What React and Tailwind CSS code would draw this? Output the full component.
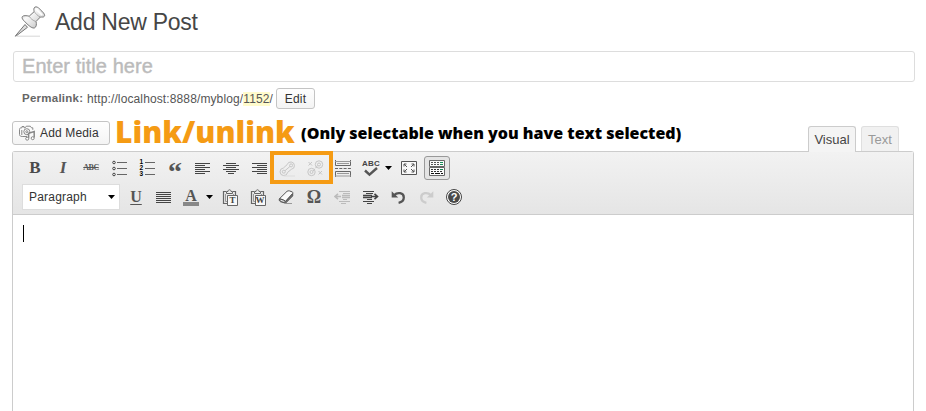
import React from "react";

const sans = "font-['Liberation_Sans',Arial,sans-serif]";
const serif = "font-['Liberation_Serif',serif]";

function Cell({ children, className = "w-7" }) {
  return <div className={`relative flex h-7 shrink-0 items-center justify-center ${className}`}>{children}</div>;
}

function Icon({ children, w = 18, h = 18, color = "#555" }) {
  return (
    <svg width={w} height={h} viewBox={`0 0 ${w} ${h}`} fill="none" stroke={color} strokeWidth="1" className="block shrink-0">
      {children}
    </svg>
  );
}

function Lines({ rows }) {
  return (
    <Icon w={16} h={14} color="#454545">
      {rows.map(([a, b], i) => (
        <path key={i} d={`M${a} ${i * 2 + 2.5}H${b}`} />
      ))}
    </Icon>
  );
}

const Arrow = () => (
  <svg width="7" height="4" viewBox="0 0 7 4" className="block">
    <path d="M0 0h7L3.5 4z" fill="#000" />
  </svg>
);

function PinIcon() {
  return (
    <svg width="32" height="32" viewBox="0 0 32 32" className="block">
      <defs>
        <linearGradient id="pin" x1="0" y1="0" x2="1" y2="1">
          <stop offset="0" stopColor="#aaa" />
          <stop offset=".35" stopColor="#fafafa" />
          <stop offset=".65" stopColor="#ddd" />
          <stop offset="1" stopColor="#aaa" />
        </linearGradient>
      </defs>
      <path d="M3 30.2h23" stroke="#ccc" strokeWidth=".8" />
      <path d="M11 18.5L2 29.2 1.3 30.2 2.6 29.6 13.5 21.3z" fill="#ddd" stroke="#666" strokeWidth=".9" />
      <path
        d="M20.8 1.2C22.3.3 24 1.2 26 3.3 28.5 5.7 31.5 8.5 30.4 10.2 29.5 11.5 27.8 11 26.4 11L22 15.5C22.8 18 22.4 21 20.7 21.8 18.8 22.7 15.8 20.6 13 17.8 10 15 7.3 12.5 8.3 10.7 9.1 9.3 12.5 9.5 15.2 10.2L20.2 5.6C19.8 4.2 19.5 2 20.8 1.2z"
        fill="url(#pin)"
        stroke="#777"
        strokeWidth="1"
      />
      <path d="M20.2 5.5c1.5 2.2 3.5 4.5 6.2 5.5M15.2 10.2c1.4 2.5 3.8 4.4 6.7 5.3" fill="none" stroke="#999" strokeWidth=".8" />
      <path d="M22 3.2l6.2 5.9" stroke="#fff" strokeWidth="1.6" />
    </svg>
  );
}

function MediaIcon() {
  return (
    <Icon w={17} h={16} color="#888">
      <path d="M8 11.5H3.2C1.6 11.5.5 10.8.5 9.5V4.4C.5 3.3 1.2 2.8 2.2 2.8H3V1.5H5v1.3h1.2L7.3 1.2h4l1.2 1.6h1.3v2" />
      <circle cx="7.8" cy="6.7" r="3" />
      <circle cx="7.8" cy="6.7" r="1" />
      <path d="M2.8 5v5" />
      <path d="M9.6 13.3V8.2l5.6-1.7v6" strokeWidth="1.5" />
      <circle cx="8.2" cy="13.7" r="1.5" fill="#fff" />
      <circle cx="13.7" cy="13.2" r="1.5" fill="#fff" />
    </Icon>
  );
}

function ListIcon({ ordered }) {
  return (
    <div className="flex items-center gap-px">
      {ordered ? (
        <div className="flex w-1 flex-col font-['Liberation_Sans',sans-serif] text-[6.5px] font-bold leading-[6px] text-black">
          <span>1</span>
          <span>2</span>
          <span>3</span>
        </div>
      ) : (
        <Icon w={4} h={17} color="#444">
          <circle cx="2" cy="2.5" r="1.3" />
          <circle cx="2" cy="8.5" r="1.3" />
          <circle cx="2" cy="14.5" r="1.3" />
        </Icon>
      )}
      <Icon w={10} h={17} color="#666">
        <path d="M0 2.5h10M0 8.5h10M0 14.5h10" />
      </Icon>
    </div>
  );
}

function PasteIcon({ letter }) {
  return (
    <div className="relative mr-[2px] h-[17px] w-4">
      <Icon w={16} h={17} color="#666">
        <path d="M4 2.5H1.5v12H5M11 2.5h2.5V6" strokeWidth="1.2" />
        <path d="M4.5 4.5v-2H6C6 .2 9 .2 9 2.5h1.5v2z" fill="#eee" />
        <path d="M3.5 5v7.5H5M11.5 5v1" stroke="#999" />
        <path d="M5.5 6.5h10v10h-10z" fill="#f8f8f8" />
      </Icon>
      <span className={`absolute left-[6px] top-[7px] w-[9px] text-center text-[9px] font-bold leading-[9px] text-[#444] ${serif}`}>{letter}</span>
    </div>
  );
}

const LinkIcon = () => (
  <Icon w={17} h={17} color="#c6c6c6">
    <path d="M8.2 4.6a3.7 3.7 0 1 1 4.2 4.7L8.6 12.4A3.8 3.8 0 1 1 4.4 8z" />
    <circle cx="12.1" cy="5.4" r="1.5" />
    <circle cx="4.8" cy="11.7" r="1.5" />
    <path d="M6 10.7l5-4.3" />
    <path d="M5 16h11" stroke="#ddd" />
  </Icon>
);

const UnlinkIcon = () => (
  <Icon w={17} h={17} color="#c6c6c6">
    <circle cx="12" cy="4.5" r="3.7" />
    <circle cx="12" cy="4.5" r="1.5" />
    <circle cx="4.5" cy="12" r="3.7" />
    <circle cx="4.5" cy="12" r="1.5" />
    <path d="M1.5 2L5 5.5M5 2L1.5 5.5M11.5 11l3.5 3.5M15 11l-3.5 3.5" />
    <path d="M8.5 8.2L10.5 5.5M6 11l2-2" />
  </Icon>
);

const MoreIcon = () => (
  <Icon w={16} h={17} color="#666">
    <path d="M.5 0v5.5h15V0M.5 17v-5.5h15V17" />
    <path d="M0 1.5h16M2 3.5h12M2 13.5h12M0 16h16" stroke="#999" />
    <path d="M0 8.5h16" strokeDasharray="3 1.3" />
  </Icon>
);

const FullscreenIcon = () => (
  <Icon w={16} h={14} color="#555">
    <path d="M.5.5h15v13H.5z" fill="#f8f8f8" />
    <path d="M3 5.5V3h2.5M3 3l3 3M10.5 3H13v2.5M13 3l-3 3M3 8.5V11h2.5M3 11l3-3M10.5 11H13V8.5M13 11l-3-3" />
  </Icon>
);

const KitchenIcon = () => (
  <Icon w={16} h={16} color="#666">
    <path d="M.5.5h15v6H.5zM.5 7.5h15v8H.5z" fill="#fafafa" />
    <path d="M2 2.5h9M2 4.5h9" stroke="#555" strokeDasharray="2 1" />
    <path d="M11 2.5h3M11 4.5h3" stroke="#168a55" />
    <path d="M2 9.5h9M2 11.5h12" stroke="#333" strokeDasharray="2 1" />
    <path d="M2 13.5h12" stroke="#111" strokeDasharray="3 1 5 1" />
    <path d="M11 9.5h3" stroke="#168a55" />
  </Icon>
);

const EraserIcon = () => (
  <Icon w={16} h={16} color="#555">
    <path d="M1.5 9.7L9 2.3c.7-.5 1.5-.6 2.5-.4l2.7 1c.8.4.8 1.1.3 1.8l-7 7.7z" fill="#fafafa" />
    <path d="M1.5 9.7l4 1.2 2 1.5 7.2-7.7v2.2l-7.2 7.3-5-1.5C1 11.9 1 10.5 1.5 9.7z" fill="#777" />
    <path d="M2.7 11.3l3.6 1.2" stroke="#eee" />
    <path d="M7 14.5h7" stroke="#999" />
  </Icon>
);

function IndentIcon({ out }) {
  return (
    <Icon w={17} h={14} color={out ? "#bbb" : "#444"}>
      {out ? (
        <>
          <path d="M5 1.5h11M9 3.5h7M9 9.5h4M5 11.5h11M7 13.5h5" />
          <path d="M8 5.5h8M8 7.5h8" strokeWidth="1.5" />
          <path d="M1 6.5h6M4 3.8L1 6.5 4 9.2" strokeWidth="1.6" />
        </>
      ) : (
        <>
          <path d="M1 1.5h11M4 3.5h7M5 9.5h5M1 11.5h11M5 13.5h5" />
          <path d="M1 5.5h9M1 7.5h9" strokeWidth="1.5" />
          <path d="M9 6.5h6M12.5 3.8l3 2.7-3 2.7" strokeWidth="1.6" />
        </>
      )}
    </Icon>
  );
}

function UndoIcon({ redo }) {
  return (
    <Icon w={15} h={14} color={redo ? "#ccc" : "#555"}>
      <g transform={redo ? "translate(15 0) scale(-1 1)" : undefined}>
        <path d="M3 5.2C6.5 1.8 12.8 2.6 12.8 7.5c0 3-2 4.6-5.2 5.3" strokeWidth="2.3" />
        <path d="M.7 1.2v6.3h6.5z" fill={redo ? "#ccc" : "#555"} stroke="none" />
      </g>
    </Icon>
  );
}

export default function App() {
  return (
    <div className={`flex h-[411px] w-[926px] flex-col overflow-hidden bg-white ${sans}`}>
      <header className="flex h-[51px] shrink-0 pl-[14px] pt-[6px]">
        <PinIcon />
        <h1 className="ml-[9px] h-8 whitespace-nowrap text-[23px] leading-8 tracking-[-0.25px] text-[#464646]">Add New Post</h1>
      </header>

      <div className="ml-[13px] flex h-[31px] w-[902px] shrink-0 items-center rounded-[3px] border border-[#ddd] pb-[2px] pl-2 text-[20px] tracking-[0.05px] text-[#bbb] [-webkit-text-stroke:0.4px_#bbb]">
        <span>Enter title here</span>
      </div>

      <div className="ml-[22px] mt-[6px] flex h-[21px] shrink-0 items-center whitespace-nowrap text-[12px] text-[#555]">
        <strong className="w-[65px] text-[11.5px] tracking-[0.25px] text-[#666]">Permalink:</strong>
        <span className="w-[189px] tracking-[0.12px]">
          http://localhost:8888/myblog/<span className="bg-[#fffbcc]">1152</span>/
        </span>
        <button className="h-[21px] w-[39px] rounded-[3px] border border-[#c4c4c4] bg-linear-to-b from-[#fefefe] to-[#f4f4f4] text-[12px] leading-[20px] tracking-[0.15px] text-[#333]">
          Edit
        </button>
      </div>

      <div className="flex h-[42px] shrink-0 whitespace-nowrap pl-3">
        <button className="mt-3 flex h-6 w-[98px] shrink-0 items-center rounded-[3px] border border-[#c4c4c4] bg-linear-to-b from-[#fefefe] to-[#f4f4f4] pl-[6px] text-[12px] tracking-[0.15px] text-[#333]">
          <MediaIcon />
          <span className="ml-1">Add Media</span>
        </button>
        <span className="ml-[5px] mt-[2px] w-[186px] shrink-0 font-['Open_Sans',sans-serif] text-[30px] font-extrabold leading-[42px] text-[#f59b14]">
          Link/unlink
        </span>
        <span className="mt-[12px] font-['Open_Sans',sans-serif] text-[16px] font-extrabold leading-6 text-black">
          (Only selectable when you have text selected)
        </span>
        <div className="z-10 ml-auto mr-[27px] mt-[17px] flex gap-[5px] text-[13px]">
          <div className="h-[26px] w-12 rounded-t-[3px] border border-b-0 border-[#ccc] bg-[#f4f4f4] text-center leading-[26px] text-[#444]">Visual</div>
          <div className="h-[25px] w-[38px] rounded-t-[3px] border border-b-0 border-[#dfdfdf] bg-[#f1f1f1] text-center leading-[26px] text-[#999]">Text</div>
        </div>
      </div>

      <main className="ml-3 flex w-[902px] grow flex-col rounded-t-[3px] border border-b-0 border-[#ccc]">
        <div className="h-[63px] shrink-0 border-b border-[#ccc] bg-linear-to-b from-[#f2f2f2] to-[#e5e5e5] pl-2 pt-[2px]">
          <div className="flex h-7 items-center">
            <Cell><b className={`text-[17px] text-[#4a4a4a] ${serif}`}>B</b></Cell>
            <Cell><b className={`text-[17px] italic text-[#555] ${serif}`}>I</b></Cell>
            <Cell><span className={`text-[8px] font-bold tracking-[-0.5px] text-[#555] line-through ${serif}`}>ABC</span></Cell>
            <Cell><ListIcon /></Cell>
            <Cell><ListIcon ordered /></Cell>
            <Cell><span className={`h-[18px] text-[28px] font-bold leading-[26px] text-[#555] ${serif}`}>“</span></Cell>
            <Cell><Lines rows={[[0, 15], [0, 10], [0, 15], [0, 10], [0, 15], [0, 10]]} /></Cell>
            <Cell><Lines rows={[[3, 13], [0, 16], [3, 13], [0, 16], [3, 13], [5, 11]]} /></Cell>
            <Cell><Lines rows={[[1, 16], [6, 16], [1, 16], [6, 16], [1, 16], [6, 16]]} /></Cell>
            <div className="relative flex">
              <Cell><LinkIcon /></Cell>
              <Cell><UnlinkIcon /></Cell>
              <div className="absolute -left-[3px] -top-[3px] h-[33px] w-[63px] border-4 border-[#f59b14]" />
            </div>
            <Cell><MoreIcon /></Cell>
            <Cell>
              <div className="flex flex-col items-center">
                <span className="text-[8px] font-bold leading-[7px] tracking-[0.2px] text-[#444]">ABC</span>
                <Icon w={16} h={10} color="#555"><path d="M2 3.5l4.5 4.2L14 1" strokeWidth="2.4" /></Icon>
              </div>
            </Cell>
            <Cell className="w-[10px] pr-[3px]"><Arrow /></Cell>
            <Cell><FullscreenIcon /></Cell>
            <div className="ml-px flex h-6 w-[26px] items-center justify-center rounded-[3px] border border-[#999] bg-[#e4e4e4]"><KitchenIcon /></div>
          </div>
          <div className="mt-px flex h-7 items-center">
            <div className="ml-px mr-[2px] flex h-[26px] w-[98px] items-center justify-between border border-[#ddd] bg-white pl-[6px] pr-[4px] text-[12px] tracking-[0.2px] text-[#333]">
              <span>Paragraph</span>
              <Arrow />
            </div>
            <Cell><span className={`text-[16px] font-bold leading-4 text-[#555] underline underline-offset-2 ${serif}`}>U</span></Cell>
            <Cell><Lines rows={[[0, 15], [0, 15], [0, 15], [0, 15], [0, 15], [0, 15]]} /></Cell>
            <Cell className="w-[26px]">
              <div className={`h-[17px] w-4 border-b-4 border-[#888] text-center text-[16px] font-bold leading-[13px] text-[#555] ${serif}`}>A</div>
            </Cell>
            <Cell className="w-[13px] pr-[3px]"><Arrow /></Cell>
            <Cell><PasteIcon letter="T" /></Cell>
            <Cell className="w-[27px]"><PasteIcon letter="W" /></Cell>
            <Cell><EraserIcon /></Cell>
            <Cell><span className={`text-[18px] font-bold text-[#555] ${serif}`}>Ω</span></Cell>
            <Cell><IndentIcon out /></Cell>
            <Cell><IndentIcon /></Cell>
            <Cell><UndoIcon /></Cell>
            <Cell><UndoIcon redo /></Cell>
            <Cell>
              <div className="flex size-4 items-center justify-center rounded-full border border-[#444] bg-white">
                <div className="size-3 rounded-full bg-[#4a4a4a] text-center text-[11px] font-bold leading-3 text-white">?</div>
              </div>
            </Cell>
          </div>
        </div>
        <div className="pl-[10px] pt-[10px]">
          <div className="h-[17px] w-px bg-black" />
        </div>
      </main>
    </div>
  );
}
